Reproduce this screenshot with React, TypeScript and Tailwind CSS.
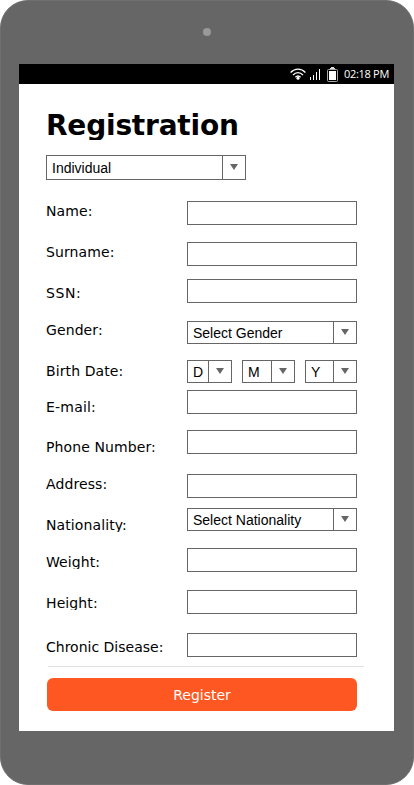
import React from "react";

const verdana = "font-['DejaVu_Sans',Verdana,sans-serif]";
const helvetica = "font-['Liberation_Sans',Helvetica,Arial,sans-serif]";

function Select({ text, size, large = false }: { text: string; size: string; large?: boolean }) {
  return (
    <div className={`flex border border-[#666] bg-white ${size}`}>
      <span className={`flex-1 overflow-hidden whitespace-nowrap pl-[5px] text-[14px] leading-[18px] text-black ${large ? "pt-[3px]" : "pt-[2px]"} ${helvetica}`}>
        {text}
      </span>
      <span className={`flex w-[23px] shrink-0 justify-center border-l border-[#666] ${large ? "pt-[8px]" : "pt-[7px]"}`}>
        <svg className="h-[6px] w-[8px]" viewBox="0 0 8 6">
          <path d="M0 0H8L4 6Z" fill="#666" />
        </svg>
      </span>
    </div>
  );
}

function TextField({ name }: { name: string }) {
  return <input aria-label={name} className="block h-6 w-[170px] border border-[#666] bg-white px-1 text-sm outline-none" />;
}

function Row({ label, height, offset, tracking = "tracking-[0.1px]", clip = "h-[18px]", children }: {
  label: string;
  height: string;
  offset: string;
  tracking?: string;
  clip?: string;
  children?: React.ReactNode;
}) {
  return (
    <div className={`flex items-start ${height}`}>
      <div className={`w-[141px] shrink-0 ${offset}`}>
        <div className={`overflow-hidden whitespace-nowrap text-[14px] leading-[18px] text-black ${verdana} ${tracking} ${clip}`}>{label}</div>
      </div>
      {children ?? <TextField name={label} />}
    </div>
  );
}

function StatusBar() {
  return (
    <div className="flex h-5 items-start justify-end bg-black pr-[5px] text-white">
      <svg className="mt-[4px] h-[12px] w-[16px]" viewBox="0 0 16 12" fill="none" stroke="#fff" strokeWidth="1.3">
        <path d="M.6 4.5C4.8.1 11.2.1 15.4 4.5M3 7C6 3.9 10 3.9 13 7M5.4 9.2C7 7.6 9 7.6 10.6 9.2" />
        <circle cx="8" cy="10.3" r="1.5" fill="#fff" stroke="none" />
      </svg>
      <svg className="ml-1 mt-[5px] h-[11px] w-[11px]" viewBox="0 0 11 11" fill="#fff">
        <path d="M0 8H1V11H0ZM3 6H4V11H3ZM6 3H7V11H6ZM9 0H10V11H9Z" />
      </svg>
      <svg className="ml-[6px] mt-[3px] h-[15px] w-[11px]" viewBox="0 0 11 15">
        <path d="M4 0H7V1H8V2H3V1H4Z" fill="#ddd" />
        <rect x=".5" y="2.5" width="10" height="12" rx="1" fill="none" stroke="#aaa" />
        <rect x="2" y="4" width="7" height="9" fill="#fff" />
      </svg>
      <span className="ml-[6px] mt-[2px] w-[45px] whitespace-nowrap font-['Open_Sans',sans-serif] text-[11px] leading-4 tracking-[-0.3px]">02:18 PM</span>
    </div>
  );
}

export default function App() {
  return (
    <div className="flex h-[785px] w-[414px] flex-col rounded-[28px] border border-[#6f6f6f] bg-[#666] px-[18px]">
      <div className="flex h-[63px] shrink-0 justify-center pt-[27px]">
        <div className="h-[8px] w-[8px] rounded-full bg-[#999]" />
      </div>
      <div className="flex h-[667px] w-[375px] shrink-0 flex-col bg-white">
        <StatusBar />
        <div className="pl-[27px]">
          <h1 className={`mt-[25px] h-[31px] overflow-hidden whitespace-nowrap text-[28px] font-bold leading-[34px] tracking-[-0.2px] text-black ${verdana}`}>
            Registration
          </h1>
          <div className="mt-[15px]">
            <Select text="Individual" size="h-[25px] w-[200px]" large />
          </div>
          <div className="mt-[21px]">
            <Row label="Name:" height="h-[41px]" offset="pt-[1px]" />
            <Row label="Surname:" height="h-[37px]" offset="pt-[1px]" />
            <Row label="SSN:" height="h-[42px]" offset="pt-[5px]" tracking="tracking-[0.6px]" />
            <Row label="Gender:" height="h-[39px]" offset="pt-0">
              <Select text="Select Gender" size="h-[23px] w-[170px]" />
            </Row>
            <Row label="Birth Date:" height="h-[30px]" offset="pt-[2px]">
              <div className="flex gap-[10px]">
                <Select text="D" size="h-[23px] w-[45px]" />
                <Select text="M" size="h-[23px] w-[53px]" />
                <Select text="Y" size="h-[23px] w-[52px]" />
              </div>
            </Row>
            <Row label="E-mail:" height="h-[40px]" offset="pt-[8px]" tracking="tracking-[0.2px]" />
            <Row label="Phone Number:" height="h-[44px]" offset="pt-[8px]" />
            <Row label="Address:" height="h-[34px]" offset="pt-[1px]" />
            <Row label="Nationality:" height="h-[40px]" offset="pt-[8px]" clip="h-[16px]">
              <Select text="Select Nationality" size="h-[23px] w-[170px]" />
            </Row>
            <Row label="Weight:" height="h-[42px]" offset="pt-[5px]" clip="h-[16px]" />
            <Row label="Height:" height="h-[43px]" offset="pt-[4px]" clip="h-[16px]" />
            <Row label="Chronic Disease:" height="h-[33px]" offset="pt-[5px]" tracking="tracking-normal" />
          </div>
          <div className="ml-[2px] h-px w-[316px] bg-[#e1e1e1]" />
          <button className={`ml-[1px] mt-[11px] block h-[33px] w-[310px] rounded-[6px] bg-[#ff5722] text-center text-[14px] leading-[35px] text-white ${verdana}`}>
            Register
          </button>
        </div>
      </div>
    </div>
  );
}
